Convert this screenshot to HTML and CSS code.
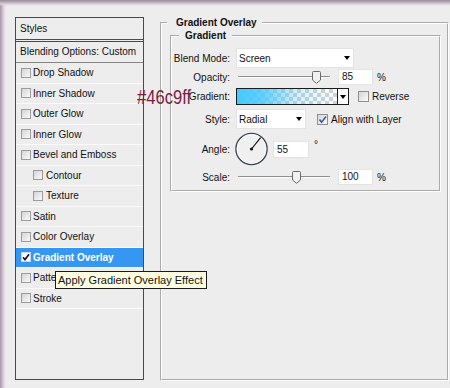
FILE: index.html
```html
<!DOCTYPE html>
<html>
<head>
<meta charset="utf-8">
<title>Layer Style - Gradient Overlay</title>
<link rel="stylesheet" href="styles.css">
</head>
<body>
<div class="window">
  <div class="styles-panel">
    <div class="panel-head">Styles</div>
    <div class="panel-blend">Blending Options: Custom</div>
    <ul class="fx-list">
      <li class="fx"><span class="cb"></span>Drop Shadow</li>
      <li class="fx"><span class="cb"></span>Inner Shadow</li>
      <li class="fx"><span class="cb"></span>Outer Glow</li>
      <li class="fx"><span class="cb"></span>Inner Glow</li>
      <li class="fx"><span class="cb"></span>Bevel and Emboss</li>
      <li class="fx sub"><span class="cb"></span>Contour</li>
      <li class="fx sub"><span class="cb"></span>Texture</li>
      <li class="fx"><span class="cb"></span>Satin</li>
      <li class="fx"><span class="cb"></span>Color Overlay</li>
      <li class="fx sel"><span class="cb on"><svg width="8" height="8" viewBox="0 0 8 8"><path d="M1 4.2 L3 6.6 L7 1.2" fill="none" stroke="#10163a" stroke-width="1.7"/></svg></span>Gradient Overlay</li>
      <li class="fx"><span class="cb"></span>Pattern Overlay</li>
      <li class="fx"><span class="cb"></span>Stroke</li>
    </ul>
  </div>

  <fieldset class="group outer">
    <legend>Gradient Overlay</legend>
    <fieldset class="group inner">
      <legend>Gradient</legend>

      <div class="row r-blend">
        <label>Blend Mode:</label>
        <div class="ctl">
          <div class="select w-blend"><span>Screen</span><i class="arrow"></i></div>
        </div>
      </div>

      <div class="row r-opacity">
        <label>Opacity:</label>
        <div class="ctl">
          <div class="slider"><div class="track"></div><svg class="thumb" style="left:75.7px" width="9" height="13" viewBox="0 0 9 13"><path d="M1.5 .5 H7.5 Q8.5 .5 8.5 1.5 V9 L4.5 12.3 L.5 9 V1.5 Q.5 .5 1.5 .5 Z" fill="#f1f1f1" stroke="#6a6a6a"/></svg></div>
          <div class="num">85</div>
          <span class="unit">%</span>
        </div>
      </div>

      <div class="row r-gradient">
        <label>Gradient:</label>
        <div class="ctl">
          <div class="swatch"><div class="grad"></div><div class="swatch-btn"><i class="arrow"></i></div></div>
          <span class="chk"></span><span class="chk-label">Reverse</span>
        </div>
      </div>

      <div class="row r-style">
        <label>Style:</label>
        <div class="ctl">
          <div class="select w-style"><span>Radial</span><i class="arrow"></i></div>
          <span class="chk chk-align"><svg width="9" height="9" viewBox="0 0 9 9"><path d="M1.5 4.5 L3.6 7.2 L8 1.5" fill="none" stroke="#3a5b9c" stroke-width="1.6"/></svg></span><span class="chk-label">Align with Layer</span>
        </div>
      </div>

      <div class="row r-angle">
        <label>Angle:</label>
        <div class="ctl">
          <svg class="dial" width="34" height="34" viewBox="0 0 34 34">
            <circle cx="16.5" cy="17" r="15.6" fill="#f0f0f0" stroke="#3d4753" stroke-width="1.4"/>
            <circle cx="16.5" cy="17" r="14.4" fill="none" stroke="#ffffff" stroke-width="0.8"/>
            <line x1="16.5" y1="17" x2="25.6" y2="5.6" stroke="#111" stroke-width="1.2"/>
            <circle cx="16.5" cy="17" r="1.6" fill="#111"/>
          </svg>
          <div class="num num-angle">55</div>
          <span class="deg">°</span>
        </div>
      </div>

      <div class="row r-scale">
        <label>Scale:</label>
        <div class="ctl">
          <div class="slider"><div class="track"></div><svg class="thumb" style="left:55.9px" width="9" height="13" viewBox="0 0 9 13"><path d="M1.5 .5 H7.5 Q8.5 .5 8.5 1.5 V9 L4.5 12.3 L.5 9 V1.5 Q.5 .5 1.5 .5 Z" fill="#f1f1f1" stroke="#6a6a6a"/></svg></div>
          <div class="num">100</div>
          <span class="unit">%</span>
        </div>
      </div>
    </fieldset>
  </fieldset>

  <div class="tooltip">Apply Gradient Overlay Effect</div>
  <div class="note">#46c9ff</div>
</div>
</body>
</html>
```
FILE: styles.css
```css
* { box-sizing: border-box; }

html, body {
  margin: 0;
  padding: 0;
}

body {
  width: 450px;
  height: 388px;
  overflow: hidden;
  background: #ededed;
  font-family: "Liberation Sans", Arial, sans-serif;
  font-size: 10px;
  color: #111;
}

.window {
  position: relative;
  height: 388px;
  display: flex;
  align-items: flex-start;
  padding: 17px 0 0 15px;
  background:
    linear-gradient(to bottom, #9a8a9c 0, #b6a9b8 2px, #dad2db 4px, rgba(237,237,237,0) 6px) top left / 100% 6px no-repeat,
    linear-gradient(to right, #a898aa 0, #c3b6c4 2px, #e0dae1 4px, rgba(237,237,237,0) 6px) top left / 6px 100% no-repeat,
    #ededed;
}

/* ---------- left styles list ---------- */
.styles-panel {
  flex: none;
  width: 129px;
  height: 363px;
  border: 1px solid #4a4a4a;
  background: #ededed;
}

.panel-head {
  height: 24px;
  padding-left: 4px;
  line-height: 21px;
  border-bottom: 3px double #4a4a4a;
}

.panel-blend {
  height: 21px;
  padding-left: 4px;
  line-height: 20px;
  border-bottom: 1px solid #858585;
}

.fx-list {
  list-style: none;
  margin: 0;
  padding: 0;
}

.fx {
  height: 20.5px;
  display: flex;
  align-items: center;
  gap: 2px;
  padding-left: 5px;
  border-bottom: 1px solid #fafafa;
  white-space: nowrap;
}

.fx.sub {
  padding-left: 17px;
  gap: 3px;
}

.fx.sel {
  background: #3597f2;
  color: #fff;
  font-weight: bold;
}

.cb {
  flex: none;
  width: 10px;
  height: 10px;
  border: 1px solid #9c9c9c;
  background: linear-gradient(135deg, #d4d4d4, #fbfbfb);
  display: flex;
  align-items: center;
  justify-content: center;
}

.cb.on {
  background: #fff;
  border-color: #c8d8ea;
}

/* ---------- group boxes ---------- */
.group {
  margin: 0;
  padding: 0;
  min-width: 0;
  border: 2px groove #ffffff;
}

.group > legend {
  font-weight: bold;
  line-height: 12px;
  padding: 0;
}

.outer {
  flex: none;
  width: 289px;
  height: 364px;
  margin-left: 16px;
}

.outer > legend {
  margin-left: 5px;
  padding: 0 5px 0 9px;
}

.inner {
  width: 271px;
  margin: 1px 0 0 8px;
  padding: 6px 0 4px 0;
}

.inner > legend {
  margin-left: 7px;
  padding: 0 6px;
}

/* ---------- form rows ---------- */
.row {
  display: grid;
  grid-template-columns: 58px auto;
  column-gap: 6px;
  align-items: center;
}

.row > label {
  text-align: right;
  white-space: nowrap;
}

.ctl {
  display: flex;
  align-items: center;
  height: 100%;
}

.r-blend { height: 20px; }
.r-opacity { height: 18px; }
.r-gradient { height: 17px; margin-top: 2px; }
.r-style { height: 20px; margin-top: 4px; }
.r-angle { height: 34px; margin-top: 3px; }
.r-scale { height: 18px; margin-top: 2px; }

.select {
  position: relative;
  height: 100%;
  background: #fff;
  border: 1px solid #e3e3e3;
  padding-left: 2px;
  display: flex;
  align-items: center;
}

.w-blend { width: 118px; }
.w-style { width: 70px; }

.arrow {
  display: block;
  width: 0;
  height: 0;
  border-left: 3.5px solid transparent;
  border-right: 3.5px solid transparent;
  border-top: 4px solid #000;
}

.select .arrow {
  margin-left: auto;
  margin-right: 3px;
}

.slider {
  position: relative;
  width: 102px;
  height: 100%;
  display: flex;
  align-items: center;
}

.track {
  margin-left: 2px;
  width: 92px;
  height: 2px;
  border-top: 1px solid #8e8e8e;
  border-bottom: 1px solid #ffffff;
}

.thumb {
  position: absolute;
  top: 3px;
}

.num {
  width: 35px;
  height: 16px;
  background: #fff;
  border: 1px solid #e4e4e4;
  padding-left: 3px;
  line-height: 14px;
}

.unit {
  margin-left: 4px;
}

.swatch {
  width: 113px;
  height: 17px;
  border: 1px solid #1c1c1c;
  display: flex;
}

.grad {
  flex: 1;
  background:
    linear-gradient(to right, #46c9ff 0, rgba(70,201,255,0.85) 25%, rgba(70,201,255,0.25) 60%, rgba(70,201,255,0) 100%),
    conic-gradient(#d2d2d2 25%, #ffffff 0 50%, #d2d2d2 0 75%, #ffffff 0) 0 0 / 8px 8px;
}

.swatch-btn {
  width: 11px;
  background: #fff;
  border-left: 1px solid #1c1c1c;
  display: flex;
  align-items: center;
  justify-content: center;
}

.swatch-btn .arrow {
  border-left-width: 3px;
  border-right-width: 3px;
}

.chk {
  flex: none;
  width: 11px;
  height: 11px;
  margin-left: 9px;
  border: 1px solid #8f8f8f;
  background: linear-gradient(135deg, #d6d6d6, #fbfbfb);
  display: flex;
  align-items: center;
  justify-content: center;
}

.chk-align {
  margin-left: 11px;
}

.chk-label {
  margin-left: 3px;
  white-space: nowrap;
}

.dial {
  flex: none;
  margin-left: -1px;
}

.num-angle {
  width: 36px;
  height: 17px;
  margin-left: 4px;
  line-height: 15px;
}

.deg {
  align-self: flex-start;
  margin-top: 7px;
  margin-left: 5px;
}

/* ---------- overlays ---------- */
.tooltip {
  position: absolute;
  left: 55px;
  top: 271px;
  width: 152px;
  height: 18px;
  background: #ffffe1;
  border: 1px solid #1a1a1a;
  font-size: 11px;
  line-height: 16px;
  padding-left: 2px;
  color: #111;
  white-space: nowrap;
}

.note {
  position: absolute;
  left: 137px;
  top: 87px;
  font-size: 20px;
  line-height: 20px;
  color: #7d1d3f;
  transform: scaleX(0.83);
  transform-origin: left top;
  white-space: nowrap;
}
```
